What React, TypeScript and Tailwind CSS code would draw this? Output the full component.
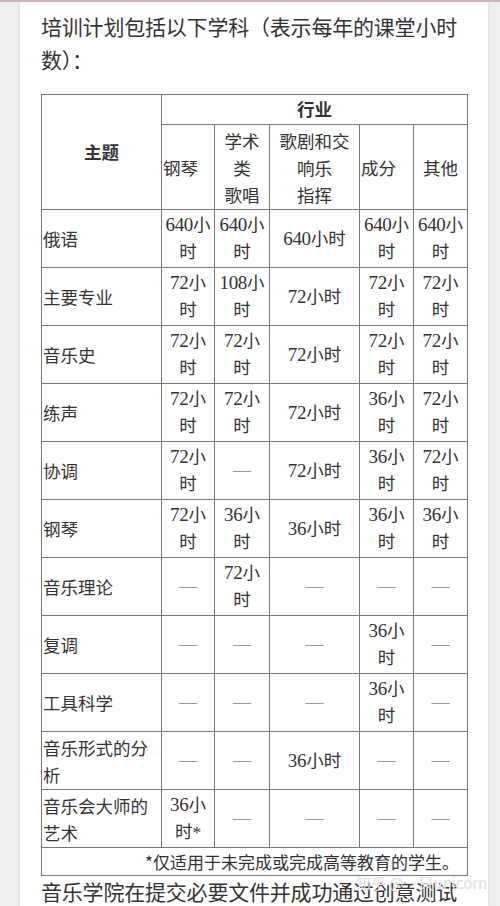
import React from 'react'

type Val = string | number | null

const ROWS: { name: string[]; vals: Val[] }[] = [
  { name: ['俄语'], vals: [640, 640, 640, 640, 640] },
  { name: ['主要专业'], vals: [72, 108, 72, 72, 72] },
  { name: ['音乐史'], vals: [72, 72, 72, 72, 72] },
  { name: ['练声'], vals: [72, 72, 72, 36, 72] },
  { name: ['协调'], vals: [72, null, 72, 36, 72] },
  { name: ['钢琴'], vals: [72, 36, 36, 36, 36] },
  { name: ['音乐理论'], vals: [null, 72, null, null, null] },
  { name: ['复调'], vals: [null, null, null, 36, null] },
  { name: ['工具科学'], vals: [null, null, null, 36, null] },
  { name: ['音乐形式的分', '析'], vals: [null, null, 36, null, null] },
  { name: ['音乐会大师的', '艺术'], vals: ['36*', null, null, null, null] },
]

const cjk = "font-['Noto_Sans_CJK_SC','Noto_Sans',sans-serif]"
const serif = "font-['Liberation_Serif','Noto_Sans_CJK_SC',serif]"

function Value({ v, wide }: { v: Val; wide: boolean }) {
  if (v === null) return <span className="text-[#9a9a9a] text-[18px]">—</span>
  const star = typeof v === 'string' && v.endsWith('*')
  const n = String(v).replace('*', '')
  const num = <span className="text-[19px] tracking-[-0.3px]">{n}</span>
  if (wide) return <span>{num}小时</span>
  return (
    <>
      <span>{num}小</span>
      <br />
      <span>时{star ? '*' : ''}</span>
    </>
  )
}

export default function App() {
  const td = 'border border-[#777] align-middle'
  return (
    <div className="min-h-[906px] w-[500px] bg-[#eeeeee] border-t-2 border-[#c7b9bb] overflow-hidden">
      <div className="relative ml-[20px] w-[468px] min-h-[904px] bg-white px-[21px] pt-[8px] shadow-[0_0_3px_rgba(0,0,0,0.12)]">
        <p className={`${cjk} text-[21px] leading-[33px] text-[#333] tracking-[-0.2px]`}>
          培训计划包括以下学科（表示每年的课堂小时数）：
        </p>

        <table className={`mt-[18px] w-[426px] table-fixed border-collapse text-[17.5px] text-[#333] ${serif}`}>
          <colgroup>
            <col className="w-[120px]" />
            <col className="w-[53px]" />
            <col className="w-[55px]" />
            <col className="w-[90px]" />
            <col className="w-[54px]" />
            <col className="w-[54px]" />
          </colgroup>
          <thead className={cjk}>
            <tr className="h-[30px]">
              <th rowSpan={2} className={`${td} font-bold text-center`}>主题</th>
              <th colSpan={5} className={`${td} font-bold text-center`}>行业</th>
            </tr>
            <tr className="h-[85px] font-normal leading-[27px]">
              <td className={`${td} text-left pl-[1px]`}>钢琴</td>
              <td className={`${td} text-center`}>学术<br />类<br />歌唱</td>
              <td className={`${td} text-center`}>歌剧和交<br />响乐<br />指挥</td>
              <td className={`${td} text-left pl-[1px]`}>成分</td>
              <td className={`${td} text-center`}>其他</td>
            </tr>
          </thead>
          <tbody className="leading-[27px]">
            {ROWS.map((r) => (
              <tr key={r.name.join('')} className="h-[58px]">
                <td className={`${td} ${cjk} text-left pl-[1px]`}>
                  {r.name.map((l, i) => (
                    <React.Fragment key={i}>
                      {i > 0 && <br />}
                      {l}
                    </React.Fragment>
                  ))}
                </td>
                {r.vals.map((v, i) => (
                  <td key={i} className={`${td} text-center whitespace-nowrap`}>
                    <Value v={v} wide={i === 2} />
                  </td>
                ))}
              </tr>
            ))}
            <tr className="h-[28px]">
              <td colSpan={6} className={`${td} ${cjk} text-right pr-[8px] leading-[26px] text-[17px]`}>
                *仅适用于未完成或完成高等教育的学生。
              </td>
            </tr>
          </tbody>
        </table>

        <p className={`${cjk} text-[21px] leading-[30px] text-[#333] tracking-[-0.2px] whitespace-nowrap`}>
          音乐学院在提交必要文件并成功通过创意测试
        </p>

        <div className={`absolute left-[336px] top-[870px] ${cjk} text-[15px] text-[#e6e6e6] whitespace-nowrap [text-shadow:0_0_1px_rgba(0,0,0,0.12)]`}>
          知乎 @一只unicorn
        </div>
      </div>
    </div>
  )
}
